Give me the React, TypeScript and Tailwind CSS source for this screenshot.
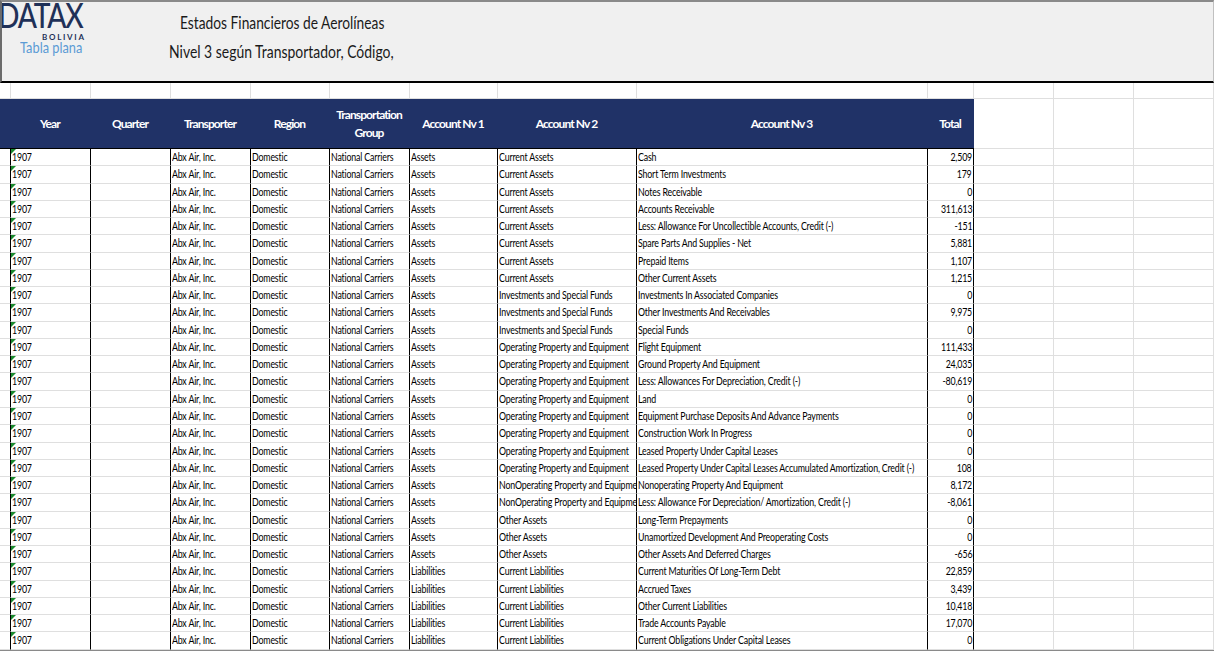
import React from 'react';

const FONT = "font-['Lato','Liberation_Sans',sans-serif]";

type Row = [string, string, string, string];

const assets = 'Assets';
const liabilities = 'Liabilities';
const current = 'Current Assets';
const invest = 'Investments and Special Funds';
const operating = 'Operating Property and Equipment';
const nonOperating = 'NonOperating Property and Equipment';
const other = 'Other Assets';
const currentLiab = 'Current Liabilities';

const rows: Row[] = [
  [assets, current, 'Cash', '2,509'],
  [assets, current, 'Short Term Investments', '179'],
  [assets, current, 'Notes Receivable', '0'],
  [assets, current, 'Accounts Receivable', '311,613'],
  [assets, current, 'Less: Allowance For Uncollectible Accounts, Credit (-)', '-151'],
  [assets, current, 'Spare Parts And Supplies - Net', '5,881'],
  [assets, current, 'Prepaid Items', '1,107'],
  [assets, current, 'Other Current Assets', '1,215'],
  [assets, invest, 'Investments In Associated Companies', '0'],
  [assets, invest, 'Other Investments And Receivables', '9,975'],
  [assets, invest, 'Special Funds', '0'],
  [assets, operating, 'Flight Equipment', '111,433'],
  [assets, operating, 'Ground Property And Equipment', '24,035'],
  [assets, operating, 'Less: Allowances For Depreciation, Credit (-)', '-80,619'],
  [assets, operating, 'Land', '0'],
  [assets, operating, 'Equipment Purchase Deposits And Advance Payments', '0'],
  [assets, operating, 'Construction Work In Progress', '0'],
  [assets, operating, 'Leased Property Under Capital Leases', '0'],
  [assets, operating, 'Leased Property Under Capital Leases Accumulated Amortization, Credit (-)', '108'],
  [assets, nonOperating, 'Nonoperating Property And Equipment', '8,172'],
  [assets, nonOperating, 'Less: Allowance For Depreciation/ Amortization, Credit (-)', '-8,061'],
  [assets, other, 'Long-Term Prepayments', '0'],
  [assets, other, 'Unamortized Development And Preoperating Costs', '0'],
  [assets, other, 'Other Assets And Deferred Charges', '-656'],
  [liabilities, currentLiab, 'Current Maturities Of Long-Term Debt', '22,859'],
  [liabilities, currentLiab, 'Accrued Taxes', '3,439'],
  [liabilities, currentLiab, 'Other Current Liabilities', '10,418'],
  [liabilities, currentLiab, 'Trade Accounts Payable', '17,070'],
  [liabilities, currentLiab, 'Current Obligations Under Capital Leases', '0'],
];

const COLS = 'grid grid-cols-[11px_80px_80px_80px_79px_80px_88px_139px_291px_46px_80px_80px_80px]';
const headers = ['Year', 'Quarter', 'Transporter', 'Region', 'Transportation Group', 'Account Nv 1', 'Account Nv 2', 'Account Nv 3', 'Total'];

// the sheet in the picture is squeezed horizontally
const Cell = ({ children, right }: { children?: React.ReactNode; right?: boolean }) => (
  <div className={`h-[17.27px] border-r border-b border-r-black border-b-[#dfdfdf] overflow-hidden whitespace-nowrap text-[11px] tracking-[-0.2px] leading-[16px] text-black ${right ? 'pr-px text-right' : 'pl-px'}`}>
    <span className={`inline-block scale-x-[0.8] ${right ? 'origin-right' : 'origin-left'}`}>{children}</span>
  </div>
);

const Blank = () => <div className="h-[17.27px] border-r border-b border-[#dfdfdf]" />;

const App: React.FC = () => {
  return (
    <div className={`w-[1214px] h-[651px] overflow-hidden bg-white ${FONT}`}>
      {/* Title band */}
      <div className="relative h-[83px] overflow-hidden border-t-2 border-l-2 border-r border-t-[#8a8a8a] border-l-[#6b6b6b] border-r-[#c0c0c0] border-b-2 border-b-black bg-[#f0f0f0]">
        <div className="absolute left-[-4px] top-[-9px] origin-left scale-x-[0.83] text-[34px] leading-[44px] font-medium tracking-[-1.5px] text-[#1f3158]">DATAX</div>
        <div className="absolute left-[40px] top-[30px] text-[8px] leading-[10px] font-bold tracking-[1.7px] text-[#1f3158]">BOLIVIA</div>
        <div className="absolute left-[18px] top-[36px] origin-left scale-x-[0.8] text-[16px] leading-[18px] text-[#5b9bd5]">Tabla plana</div>
        <div className="absolute left-[178px] top-[10px] origin-left scale-x-[0.81] text-[17px] leading-[22px] text-[#1a1a1a]">Estados Financieros de Aerolíneas</div>
        <div className="absolute left-[167px] top-[39px] origin-left scale-x-[0.82] text-[17px] leading-[22px] text-[#1a1a1a]">Nivel 3 según Transportador, Código,</div>
      </div>

      {/* Blank sheet row above the table */}
      <div className={`${COLS} h-[16px]`}>
        {Array.from({ length: 13 }).map((_, i) => (
          <div key={i} className="border-r border-b border-[#dfdfdf]" />
        ))}
      </div>

      {/* Header row */}
      <div className={`${COLS} h-[50px]`}>
        <div className="bg-[#203267] border-b border-black" />
        {headers.map((h) => (
          <div key={h} className="flex items-center justify-center bg-[#203267] border-b border-black pl-[3px] pr-[5px] text-center text-[12px] leading-[18px] font-bold tracking-[-0.9px] text-white">
            {h}
          </div>
        ))}
        <div className="border-r border-b border-[#dfdfdf]" />
        <div className="border-r border-b border-[#dfdfdf]" />
        <div className="border-r border-b border-[#dfdfdf]" />
      </div>

      {/* Data rows */}
      {rows.map((r, i) => (
        <div key={i} className={COLS}>
          <div className="h-[17.27px] border-r border-b border-r-black border-b-[#dfdfdf]" />
          <div className="relative">
            <span className="absolute left-0 top-0 h-0 w-0 border-t-[5px] border-r-[5px] border-t-[#1a8a2e] border-r-transparent" />
            <Cell>1907</Cell>
          </div>
          <Cell />
          <Cell>Abx Air, Inc.</Cell>
          <Cell>Domestic</Cell>
          <Cell>National Carriers</Cell>
          <Cell>{r[0]}</Cell>
          <Cell>{r[1]}</Cell>
          <Cell>{r[2]}</Cell>
          <Cell right>{r[3]}</Cell>
          <Blank />
          <Blank />
          <Blank />
        </div>
      ))}
      <div className="h-[2px] bg-[#8a8a8a]" />
    </div>
  );
};

export default App;
